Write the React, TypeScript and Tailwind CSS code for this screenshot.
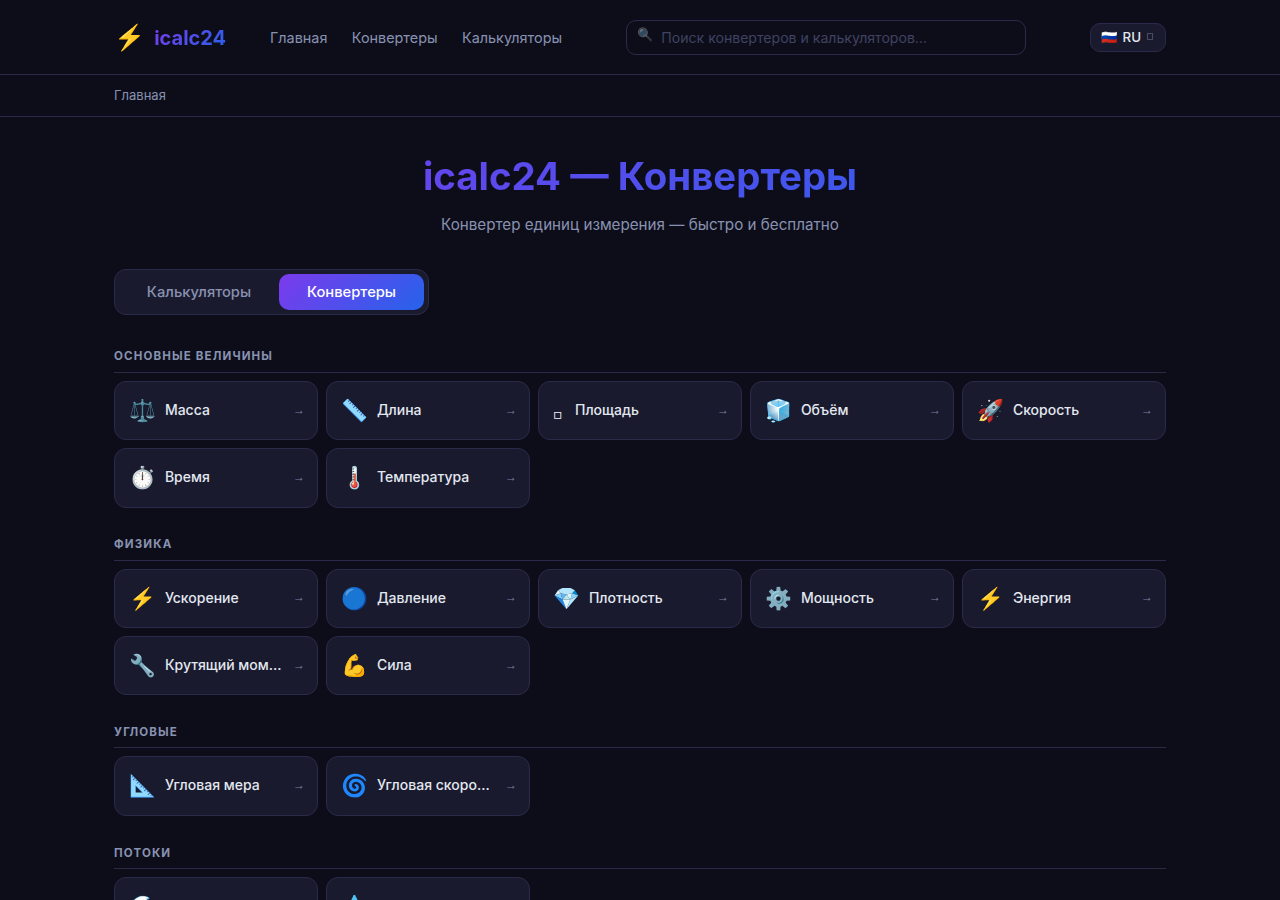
const sections = [
  { title: "Основные величины", items: [["⚖️","Масса"],["📏","Длина"],["▫","Площадь"],["🧊","Объём"],["🚀","Скорость"],["⏱️","Время"],["🌡️","Температура"]] },
  { title: "Физика", items: [["⚡","Ускорение"],["🔵","Давление"],["💎","Плотность"],["⚙️","Мощность"],["⚡","Энергия"],["🔧","Крутящий момент"],["💪","Сила"]] },
  { title: "Угловые", items: [["📐","Угловая мера"],["🌀","Угловая скорость"]] },
  { title: "Потоки", items: [["🌊","Расход"],["💧","Массовый расход"]] },
];

function Icon({ icon }: { icon: string }) {
  if (icon === "▫") return <span className="w-[13px] pt-[6px] font-['DejaVu_Sans'] text-[14.4px] leading-none text-[#f1f5f9]">▫</span>;
  if (icon === "📏" || icon === "📐") return <span className="text-[21.6px] leading-none hue-rotate-[170deg]">{icon}</span>;
  return <span className="text-[21.6px] leading-none">{icon}</span>;
}

export default function App() {
  return (
    <div className="h-[900px] overflow-hidden bg-[#0d0d1a] font-['Inter','Noto_Color_Emoji',sans-serif]">
      <header className="h-[75px] border-b border-[#2a2a4a]">
        <div className="mx-auto flex h-full w-[1052px] items-center">
          <a className="flex w-[112px] items-center gap-[9px]">
            <span className="text-[25px] leading-none">⚡</span>
            <span className="bg-[linear-gradient(135deg,#7c3aed,#2563eb)] bg-clip-text pt-[1px] text-[20px] font-bold text-transparent">icalc24</span>
          </a>
          <nav className="mt-[1px] ml-[44px] flex gap-[24.4px] text-[14.4px] text-[#8892b0]">
            <span>Главная</span>
            <span>Конвертеры</span>
            <span>Калькуляторы</span>
          </nav>
          <div className="ml-[64px] flex h-[35px] w-[400px] items-center gap-[8px] rounded-[10px] border border-[#2a2a4a] pl-[10px] text-[14.08px] text-[#3f4260]">
            <span className="-mt-[4px] text-[13px] opacity-50">🔍</span>
            <span className="pt-[1px]">Поиск конвертеров и калькуляторов...</span>
          </div>
          <div className="ml-[64px] flex h-[29px] w-[76px] items-center gap-[5px] rounded-[10px] border border-[#2a2a4a] bg-[#1a1a2e] pl-[10px] text-[13.3px] font-medium text-[#e2e8f0]">
            <span className="mt-[1px]">🇷🇺</span>
            <span className="mt-[1px]">RU</span>
            <span className="mb-[1px] ml-[1px] h-[7px] w-[6px] border border-[#4a4a60]"></span>
          </div>
        </div>
      </header>
      <div className="h-[42px] border-b border-[#2a2a4a]">
        <div className="mx-auto flex h-full w-[1052px] items-center text-[13px] text-[#8892b0]">Главная</div>
      </div>
      <main className="mx-auto w-[1052px]">
        <h1 className="mt-[35px] bg-[linear-gradient(135deg,#7c3aed,#2563eb)] bg-clip-text text-center text-[38.4px] leading-[48px] font-bold text-transparent">icalc24 — Конвертеры</h1>
        <p className="mt-[13px] text-center text-[15.2px] leading-[24px] text-[#8892b0]">Конвертер единиц измерения — быстро и бесплатно</p>
        <div className="mt-[32px] flex h-[46px] w-[315px] rounded-[12px] border border-[#2a2a4a] bg-[#1a1a2e] p-[4px] text-[14.72px] font-medium">
          <div className="flex w-[160px] items-center justify-center pt-[1px] text-[#8892b0]">Калькуляторы</div>
          <div className="flex w-[145px] items-center justify-center rounded-[10px] bg-[linear-gradient(135deg,#7c3aed,#2563eb)] pt-[1px] text-white">Конвертеры</div>
        </div>
        {sections.map((s, i) => (
          <section key={s.title} className={i === 0 ? "mt-[33.2px]" : i === 2 ? "mt-[28.25px]" : "mt-[28.2px]"}>
            <h2 className={i >= 2 ? "border-b border-[#2a2a4a] pt-[1px] pb-[7px] text-[11.52px] leading-[16px] font-bold tracking-[0.1em] text-[#8892b0] uppercase" : "border-b border-[#2a2a4a] pb-[8px] text-[11.52px] leading-[16px] font-bold tracking-[0.1em] text-[#8892b0] uppercase"}>{s.title}</h2>
            <div className="mt-[8px] grid grid-cols-5 gap-[8px]">
              {s.items.map(([icon, label]) => (
                <div key={label} className="flex h-[59.2px] items-center gap-[9px] rounded-[12px] border border-[#2a2a4a] bg-[#1a1a2e] pr-[12px] pl-[14px]">
                  <Icon icon={icon} />
                  <span className="mr-[1px] min-w-0 flex-1 truncate pb-[2px] text-[14px] font-medium text-[#e2e8f0]">{label}</span>
                  <span className="pb-[2px] font-['Liberation_Sans'] text-[12px] text-[#7a80a0]">→</span>
                </div>
              ))}
            </div>
          </section>
        ))}
      </main>
    </div>
  );
}
